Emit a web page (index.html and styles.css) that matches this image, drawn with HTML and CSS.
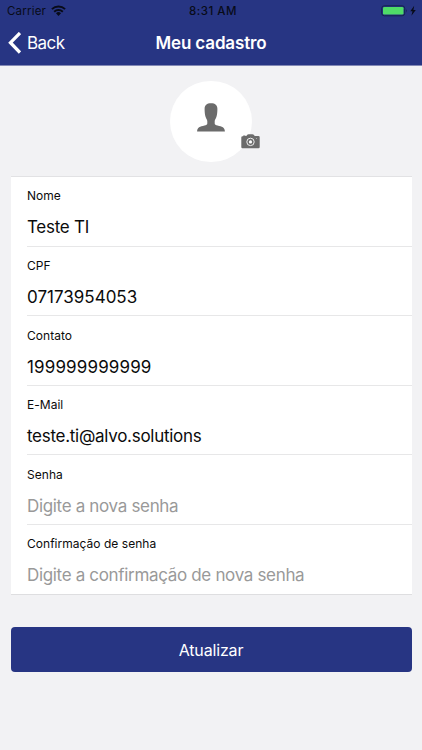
FILE: index.html
```html
<!DOCTYPE html>
<html lang="pt-BR">
<head>
<meta charset="utf-8">
<meta name="viewport" content="width=device-width, initial-scale=1">
<title>Meu cadastro</title>
<link rel="stylesheet" href="styles.css">
</head>
<body>
<header class="header">
  <div class="status">
    <div class="status-left"><span class="carrier">Carrier</span>
      <svg class="wifi" width="15" height="11" viewBox="0 0 15 11"><g fill="none" stroke="#080b18" stroke-width="1.9"><path d="M.9 4.1a9.6 9.6 0 0 1 13.2 0"/><path d="M3.2 6.7a6.2 6.2 0 0 1 8.6 0"/></g><path d="M5 8.3a3.6 3.6 0 0 1 5 0L7.5 10.9z" fill="#080b18"/></svg>
    </div>
    <span class="time">8:31 AM</span>
    <div class="status-right">
      <svg width="36" height="12" viewBox="0 0 36 12"><rect x=".7" y=".8" width="23" height="10" rx="2.6" fill="none" stroke="#14234d" stroke-width="1"/><rect x="2" y="2" width="20.5" height="7.6" rx="1.3" fill="#4fdc68"/><path d="M25.2 4.1q1.6 1.6 0 3.3z" fill="#14234d"/><path d="M33.2 .8 29.3 6.2h2.2l-1.1 4.6 4.4-5.9h-2.4z" fill="#080b18"/></svg>
    </div>
  </div>
  <div class="nav">
    <a class="back"><svg width="13" height="22" viewBox="0 0 13 22"><path d="M12 1 2.500 10.700l9.500 9.800" fill="none" stroke="#fff" stroke-width="3.300"/></svg><span>Back</span></a>
    <h1 class="title">Meu cadastro</h1>
  </div>
</header>
<main class="page">
  <div class="avatar">
    <svg width="28" height="29" viewBox="0 0 28 29"><path d="M14 .2c4.200 0 6.400 2 6.400 5.600 0 3-.3 6.200-1 8.200-.6 1.700-1.700 2.700-1.700 4.200v2.300c0 1.200 1.100 1.700 2.800 2.100 4.500 1 7.300 2 7.400 5.900H.1c.1-3.900 2.900-4.900 7.400-5.900 1.700-.4 2.800-.9 2.800-2.100v-2.300c0-1.500-1.100-2.500-1.700-4.200-.7-2-1-5.200-1-8.200C7.600 2.200 9.800.2 14 .2z" fill="#6b6b6b"/></svg>
    <svg class="camera" width="19" height="15" viewBox="0 0 19 15"><path d="M1.500 2.300H2.200V1.400H4.400V2.100H5.200L6.600.6Q7 .2 7.700.2H11.300Q12 .2 12.400.6L13.800 2.100H17.500Q18.700 2.100 18.700 3.300V12.900Q18.700 14.200 17.500 14.200H1.500Q.3 14.200.3 12.900V3.500Q.3 2.300 1.500 2.300z" fill="#6b6b6b"/><circle cx="9.500" cy="7.900" r="3.700" fill="none" stroke="#eee" stroke-width="1"/><circle cx="9.500" cy="7.900" r="1.600" fill="#fff"/><circle cx="15.500" cy="4.500" r=".5" fill="#bbb"/></svg>
  </div>
  <section class="card">
    <div class="field"><span class="label">Nome</span><span class="value">Teste TI</span></div>
    <div class="field"><span class="label">CPF</span><span class="value cpf">07173954053</span></div>
    <div class="field"><span class="label">Contato</span><span class="value phone">199999999999</span></div>
    <div class="field"><span class="label">E-Mail</span><span class="value">teste.ti@alvo.solutions</span></div>
    <div class="field"><span class="label">Senha</span><span class="value hint">Digite a nova senha</span></div>
    <div class="field"><span class="label">Confirmação de senha</span><span class="value hint">Digite a confirmação de nova senha</span></div>
  </section>
  <button class="submit">Atualizar</button>
</main>
</body>
</html>
```
FILE: styles.css
```css
* { box-sizing: border-box; }
body {
  margin: 0;
  height: 750px;
  overflow: hidden;
  background: #f2f2f4;
  color: #0b0b0b;
  font-family: Inter, "Liberation Sans", sans-serif;
}
.header {
  height: 66px;
  background: #273583;
  border-bottom: 1px solid #8389b5;
}
.status {
  height: 22px;
  display: grid;
  grid-template-columns: 1fr auto 1fr;
  align-items: center;
  padding: 0 5px 0 7px;
  color: #080b18;
  font-size: 12px;
  line-height: 22px;
}
.status-left { display: flex; align-items: center; gap: 5px; }
.wifi { position: relative; top: -.5px; }
.status-right { display: flex; justify-content: flex-end; }
.carrier { font-size: 11.5px; letter-spacing: .2px; }
.time { font-weight: 500; font-size: 11.5px; letter-spacing: .5px; padding-left: 2px; }
.nav {
  height: 42px;
  display: grid;
  grid-template-columns: 1fr auto 1fr;
  align-items: center;
  padding: 0 8px;
  color: #fff;
}
.back { display: flex; align-items: center; gap: 6px; font-size: 17px; letter-spacing: -.55px; }
.title { margin: 0; font-size: 17px; font-weight: 600; letter-spacing: -.15px; }
.page { padding: 14.7px 10.5px 0; }
.avatar {
  position: relative;
  width: 81.4px;
  height: 81.4px;
  margin: 0 auto 13.9px;
  padding-top: 22.6px;
  border-radius: 50%;
  background: #fff;
  text-align: center;
  line-height: 0;
}
.camera { position: absolute; left: 70.7px; top: 53.2px; }
.card {
  height: 418.6px;
  padding-left: 16px;
  background: #fff;
  border-top: 1px solid #e2e2e4;
  border-bottom: 1px solid #dedee0;
}
.field {
  display: flex;
  flex-direction: column;
  height: 69.6px;
  padding: 10.4px 0 0 .5px;
  border-bottom: 1px solid #e7e7e8;
  white-space: nowrap;
}
.field:last-child { border-bottom: 0; height: 68px; }
.label { font-size: 12px; line-height: 18px; letter-spacing: .03px; }
.value { font-size: 17px; line-height: 24px; margin-top: 10px; letter-spacing: -.28px; }
.cpf { letter-spacing: 0; }
.phone { letter-spacing: .14px; }
.hint { color: #999; letter-spacing: -.33px; }
.submit {
  display: block;
  width: 100%;
  height: 45px;
  margin-top: 32.4px;
  padding: 1px 0 0;
  border: 0;
  border-radius: 4px;
  background: #273583;
  color: #fff;
  font: 16px/44px Inter, "Liberation Sans", sans-serif;
  letter-spacing: -.15px;
}
```
